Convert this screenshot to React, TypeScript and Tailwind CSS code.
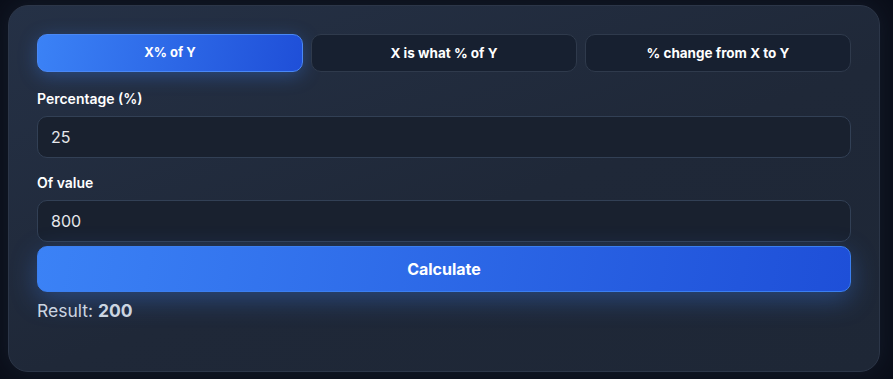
import { useState } from "react";

type Mode = "of" | "what" | "change";

const tabs: { id: Mode; label: string }[] = [
  { id: "of", label: "X% of Y" },
  { id: "what", label: "X is what % of Y" },
  { id: "change", label: "% change from X to Y" },
];

export default function App() {
  const [mode, setMode] = useState<Mode>("of");
  const [pct, setPct] = useState("25");
  const [val, setVal] = useState("800");
  const [result, setResult] = useState("200");

  const calc = () => {
    const a = parseFloat(pct);
    const b = parseFloat(val);
    if (isNaN(a) || isNaN(b)) return setResult("—");
    if (mode === "of") setResult(String((a / 100) * b));
    else if (mode === "what") setResult(b === 0 ? "—" : String((a / b) * 100));
    else setResult(a === 0 ? "—" : String(((b - a) / a) * 100));
  };

  return (
    <div className="min-h-screen bg-[#0a0e19] pt-[5px] pl-2 font-['Inter',sans-serif]">
      <div className="w-[872px] rounded-[20px] border border-[#2c3648] bg-[linear-gradient(160deg,#253146_0%,#1f2838_55%,#1e2736_100%)] px-[28px] pt-[28px] pb-12 shadow-[0_0_24px_rgba(30,41,59,0.5)]">
        {/* Tabs */}
        <div className="grid grid-cols-3 gap-2">
          {tabs.map((t) =>
            t.id === mode ? (
              <button
                key={t.id}
                onClick={() => setMode(t.id)}
                className="h-[38px] rounded-[10px] border border-[#4a88f5] bg-[linear-gradient(100deg,#3b82f6,#1f4fd8)] text-[13px] font-bold text-white shadow-[0_4px_18px_rgba(59,130,246,0.35)]"
              >
                {t.label}
              </button>
            ) : (
              <button
                key={t.id}
                onClick={() => setMode(t.id)}
                className="h-[38px] rounded-[10px] border border-[#2f3a4c] bg-[#172030] text-[13.5px] font-bold text-white"
              >
                {t.label}
              </button>
            )
          )}
        </div>

        {/* Fields */}
        <label className="mt-[17px] mb-[7px] block text-[14px] leading-5 font-semibold text-white">
          Percentage (%)
        </label>
        <input
          value={pct}
          onChange={(e) => setPct(e.target.value)}
          className="block h-[42px] w-full rounded-[10px] border border-[#324055] bg-[#19212f] px-[13px] text-[16px] text-[#e5e7eb] outline-none"
        />

        <label className="mt-[15px] mb-[7px] block text-[14px] leading-5 font-semibold text-white">
          Of value
        </label>
        <input
          value={val}
          onChange={(e) => setVal(e.target.value)}
          className="block h-[42px] w-full rounded-[10px] border border-[#324055] bg-[#19212f] px-[13px] text-[16px] text-[#e5e7eb] outline-none"
        />

        <button
          onClick={calc}
          className="mt-1 block h-[46px] w-full rounded-[10px] border border-[#3b7ff0] bg-[linear-gradient(100deg,#3b82f6,#1e4fd8)] text-[16px] font-bold text-white shadow-[0_8px_26px_rgba(59,130,246,0.35)]"
        >
          Calculate
        </button>

        <div className="mt-[7px] text-[17.5px] leading-6 text-[#cbd5e1]">
          Result: <span className="font-bold">{result}</span>
        </div>
      </div>
    </div>
  );
}
